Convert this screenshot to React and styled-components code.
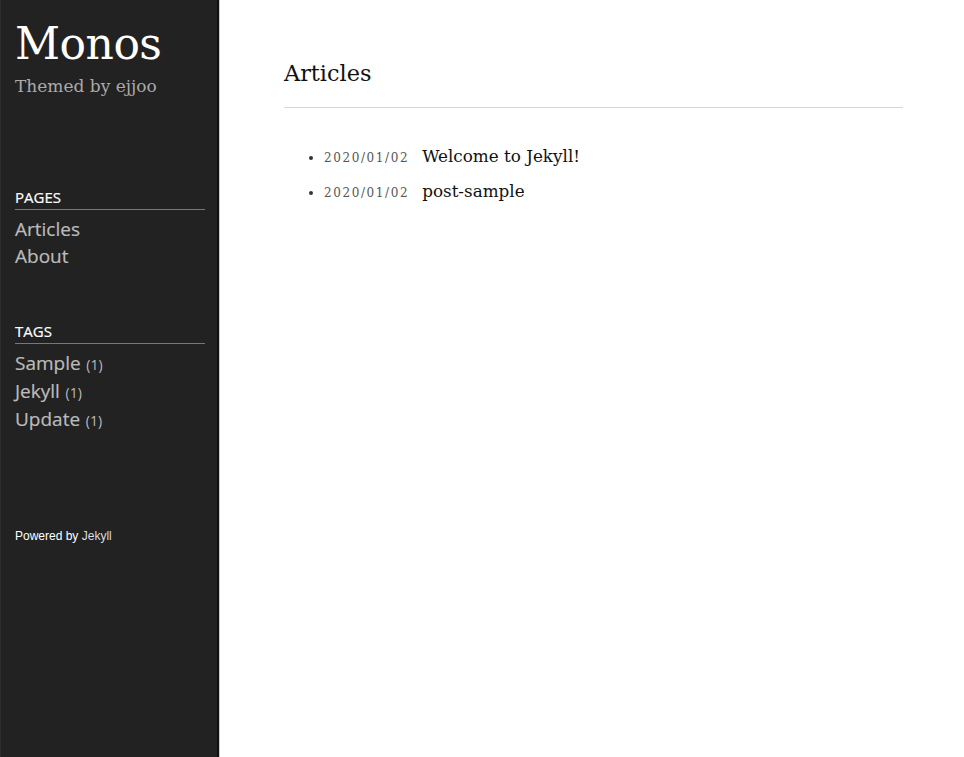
import React from "react";
import styled, { createGlobalStyle } from "styled-components";

const GlobalStyle = createGlobalStyle`
  html, body {
    margin: 0;
    padding: 0;
    height: 100%;
  }
  body {
    font-family: "Liberation Serif", Georgia, serif;
    background: #fff;
  }
  #root {
    height: 100%;
  }
`;

const pages = ["Articles", "About"];
const tags = [
  { name: "Sample", count: 1 },
  { name: "Jekyll", count: 1 },
  { name: "Update", count: 1 },
];
const posts = [
  { date: "2020/01/02", title: "Welcome to Jekyll!" },
  { date: "2020/01/02", title: "post-sample" },
];

/* ================= LAYOUT ================= */

const Page = styled.div`
  display: flex;
  min-height: 757px;
  height: 100%;
`;

const Sidebar = styled.aside`
  width: 202px;
  flex-shrink: 0;
  background: #222;
  border-left: 1px solid #2e2e2e;
  border-right: 2px solid #111;
  box-shadow: 1px 0 0 #ccc;
  padding: 16px 0 0 14px;
  box-sizing: content-box;
  display: flex;
  flex-direction: column;
`;

const SiteTitle = styled.h1`
  margin: 0;
  font-family: "DejaVu Serif", Georgia, serif;
  font-weight: 400;
  font-size: 44px;
  line-height: 56px;
  color: #fff;
  letter-spacing: -0.5px;
`;

const SiteDesc = styled.div`
  font-family: "DejaVu Serif", Georgia, serif;
  font-size: 17px;
  line-height: 22px;
  color: #aaa;
  margin-top: 3px;
`;

const Section = styled.div`
  margin-top: ${({ $top }) => $top}px;
  width: 190px;
`;

const SectionTitle = styled.div`
  font-family: "Open Sans", sans-serif;
  font-size: 15px;
  line-height: 20px;
  color: #fff;
  border-bottom: 1px solid #777;
  padding-bottom: 2px;
  margin-bottom: 6px;
  -webkit-text-stroke: 0.2px #fff;
`;

const NavLink = styled.a`
  display: block;
  font-family: "Open Sans", sans-serif;
  font-size: 19px;
  line-height: 27px;
  color: #bbb;
  text-decoration: none;
  -webkit-text-stroke: 0.2px #bbb;
`;

const Count = styled.span`
  font-size: 14px;
  margin-left: 2px;
  -webkit-text-stroke: 0;
`;

const Footer = styled.div`
  margin-top: 95px;
  font-family: "Liberation Sans", Arial, sans-serif;
  font-size: 12px;
  color: #fff;
`;

const FooterLink = styled.span`
  color: #ddd;
`;

/* ================= MAIN ================= */

const Main = styled.main`
  flex: 1;
  padding: 56px 61px 0 65px;
`;

const Heading = styled.h2`
  margin: 0;
  font-family: "DejaVu Serif", Georgia, serif;
  font-weight: 400;
  font-size: 22.4px;
  line-height: 34px;
  color: #111;
  padding-bottom: 17px;
  border-bottom: 1px solid #d6d6d6;
`;

const PostList = styled.ul`
  margin: 32px 0 0;
  padding-left: 40px;
`;

const PostItem = styled.li`
  font-size: 13px;
  line-height: 35px;
  color: #333;
`;

const PostDate = styled.span`
  font-family: "DejaVu Serif", Georgia, serif;
  font-size: 12px;
  line-height: 1;
  letter-spacing: 1.6px;
  color: #555;
  margin-right: 13px;
`;

const PostTitle = styled.a`
  font-family: "DejaVu Serif", Georgia, serif;
  font-size: 16.8px;
  line-height: 1;
  color: #111;
  text-decoration: none;
`;

export default function App() {
  return (
    <>
      <GlobalStyle />
      <Page>
        <Sidebar>
          <SiteTitle>Monos</SiteTitle>
          <SiteDesc>Themed by ejjoo</SiteDesc>

          <Section $top={90}>
            <SectionTitle>PAGES</SectionTitle>
            {pages.map((p) => (
              <NavLink key={p}>{p}</NavLink>
            ))}
          </Section>

          <Section $top={51}>
            <SectionTitle>TAGS</SectionTitle>
            {tags.map((t) => (
              <NavLink key={t.name}>
                {t.name}
                <Count> ({t.count})</Count>
              </NavLink>
            ))}
          </Section>

          <Footer>
            Powered by <FooterLink>Jekyll</FooterLink>
          </Footer>
        </Sidebar>

        <Main>
          <Heading>Articles</Heading>
          <PostList>
            {posts.map((post) => (
              <PostItem key={post.title}>
                <PostDate>{post.date}</PostDate>
                <PostTitle>{post.title}</PostTitle>
              </PostItem>
            ))}
          </PostList>
        </Main>
      </Page>
    </>
  );
}
